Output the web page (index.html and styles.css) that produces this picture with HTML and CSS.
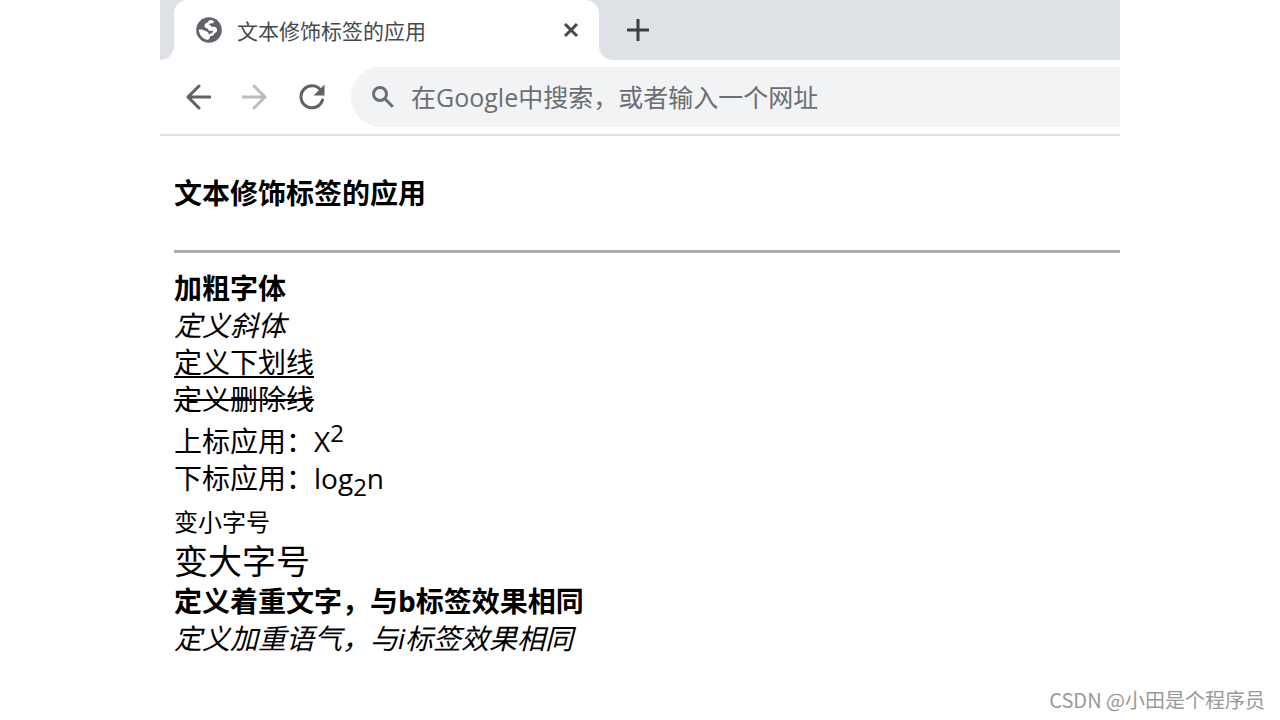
FILE: index.html
```html
<!DOCTYPE html>
<html lang="zh-CN">
<head>
    <meta charset="UTF-8">
    <title>文本修饰标签的应用</title>
    <link rel="stylesheet" href="styles.css">
</head>
<body>
    <div class="browser">
        <div class="tab-strip">
            <div class="strip-left"></div>
            <div class="tab">
                <svg class="globe" viewBox="0 0 26 26" aria-hidden="true">
                    <circle cx="13" cy="13" r="12.800" fill="#5f6368"/>
                    <path fill="white" d="M15.500 3c-2 0-3 .8-3.500 2.200-2 .3-3.500 1.600-3.500 3.500s1.500 2.800 3.300 2.800c.2 1.800 1.500 2.500 3.200 2.500h2.200c0 1.200-.7 2-2 2.200-1.400.2-2.200 1-2.200 2.300-.1-2.700-1.200-4.300-3.500-4.600-1.600-.2-2.500-1.400-4-1.400H2.800c.2 5.500 4 9.700 9 10.300 1.700-.5 2.200-2 2.200-3.500 2.800 0 4.200-1.500 4.500-3.200 1.800-.4 2.500-1.700 2.500-3.100 0-2-1.300-3.200-3.500-3.200h-2.300c-.1-1.300-.9-2-2.300-2.100.5-1 1.200-1.200 2.400-1.200 1.500 0 2.300-.8 2.700-2.200z"/>
                </svg>
                <span class="tab-title">文本修饰标签的应用</span>
                <button class="icon-btn close" type="button" aria-label="关闭">
                    <svg viewBox="0 0 16 16"><path d="M2 2l12 12M14 2L2 14"/></svg>
                </button>
            </div>
            <div class="strip-right">
                <button class="icon-btn add" type="button" aria-label="新标签页">
                    <svg viewBox="0 0 22 22"><path d="M11 0v22M0 11h22"/></svg>
                </button>
            </div>
        </div>

        <div class="toolbar">
            <button class="icon-btn nav" type="button" aria-label="后退">
                <svg viewBox="0 0 26 26"><path d="M25 13H3M14 2L3 13l11 11"/></svg>
            </button>
            <button class="icon-btn nav forward" type="button" aria-label="前进">
                <svg viewBox="0 0 26 26"><path d="M1 13h22M12 2l11 11-11 11"/></svg>
            </button>
            <button class="icon-btn nav" type="button" aria-label="刷新">
                <svg viewBox="0 0 26 26">
                    <path d="M22 6.500A11 11 0 1 0 23.500 16"/>
                    <path class="solid" d="M25.500 .5v11h-11z"/>
                </svg>
            </button>
            <label class="omnibox">
                <svg viewBox="0 0 22 22" aria-hidden="true"><circle cx="8" cy="8" r="6.500"/><path d="M12.800 12.800l8 8"/></svg>
                <input type="text" aria-label="地址栏" placeholder="在Google中搜索，或者输入一个网址">
            </label>
        </div>

        <div class="page">
            <h1>文本修饰标签的应用</h1>
            <hr>
            <b>加粗字体</b><br>
            <i>定义斜体</i><br>
            <u>定义下划线</u><br>
            <del>定义删除线</del><br>
            上标应用：X<sup>2</sup><br>
            下标应用：log<sub>2</sub>n<br>
            <small>变小字号</small><br>
            <span class="big">变大字号</span><br>
            <strong>定义着重文字，与b标签效果相同</strong><br>
            <em>定义加重语气，与i标签效果相同</em>
        </div>
    </div>

    <footer class="watermark">CSDN @小田是个程序员</footer>
</body>
</html>
```
FILE: styles.css
```css
* {
    box-sizing: border-box;
}
body {
    margin: 0;
    min-height: 100vh;
    display: flex;
    flex-direction: column;
    background: white;
    color: black;
    font-family: "Open Sans", "Noto Sans CJK SC", sans-serif;
}
.browser {
    width: 75%;
    margin: 0 auto;
}

/* tab strip */
.tab-strip {
    display: flex;
    height: 60px;
    background: linear-gradient(#dee1e6 50%, white 50%);
}
.strip-left {
    width: 14px;
    background: #dee1e6;
    border-radius: 0 0 14px 0;
}
.tab {
    display: flex;
    align-items: center;
    width: 425px;
    padding: 0 20px 0 22px;
    background: white;
    border-radius: 14px 14px 0 0;
}
.globe {
    width: 26px;
    height: 26px;
    margin-right: 15px;
}
.tab-title {
    flex: 1;
    font-size: 21px;
    color: #45494d;
}
.strip-right {
    flex: 1;
    display: flex;
    align-items: center;
    padding-left: 28px;
    background: #dee1e6;
    border-radius: 0 0 0 14px;
}
.icon-btn {
    display: flex;
    padding: 0;
    border: none;
    background: none;
    cursor: pointer;
}
.icon-btn svg {
    fill: none;
    stroke: #5f6368;
    stroke-width: 3;
    stroke-linecap: round;
}
.close svg {
    width: 16px;
    height: 16px;
    stroke: #45494d;
    stroke-linecap: butt;
}
.add svg {
    width: 22px;
    height: 22px;
    stroke: #3c4043;
}

/* toolbar */
.toolbar {
    display: flex;
    align-items: center;
    gap: 31px;
    height: 76px;
    padding-left: 25px;
    border-bottom: 2px solid #dfe0e2;
}
.nav svg {
    width: 26px;
    height: 26px;
}
.icon-btn.forward svg {
    stroke: #babcbe;
}
.icon-btn .solid {
    fill: #5f6368;
    stroke: none;
}
.omnibox {
    flex: 1;
    display: flex;
    align-items: center;
    gap: 17px;
    height: 60px;
    margin-left: -5px;
    padding-left: 21px;
    background: #f1f3f4;
    border-radius: 30px 0 0 30px;
}
.omnibox svg {
    width: 22px;
    height: 22px;
    fill: none;
    stroke: #6b6e72;
    stroke-width: 3;
}
.omnibox input {
    flex: 1;
    min-width: 0;
    padding: 0;
    border: none;
    outline: none;
    background: none;
    font-family: inherit;
    font-size: 25px;
}
.omnibox input::placeholder {
    color: #6b6e72;
}

/* page content */
.page {
    padding: 39px 0 0 14px;
    font-size: 28px;
    line-height: 37px;
}
h1 {
    margin: 0 0 38px;
    font-size: 28px;
}
hr {
    height: 3px;
    margin: 0 0 17px;
    border: none;
    background: #adadad;
}
u, del {
    text-decoration-thickness: 2px;
}
u {
    text-underline-offset: 3px;
    text-decoration-skip-ink: none;
}
sup, sub {
    font-size: 24px;
    line-height: 30px;
}
small {
    font-size: 24px;
}
.big {
    font-size: 34px;
    line-height: 43px;
}

.watermark {
    margin-top: auto;
    padding: 0 15px 6px;
    text-align: right;
    font-family: "Noto Sans CJK SC", sans-serif;
    font-size: 20px;
    line-height: 28px;
    color: #999;
}
```
